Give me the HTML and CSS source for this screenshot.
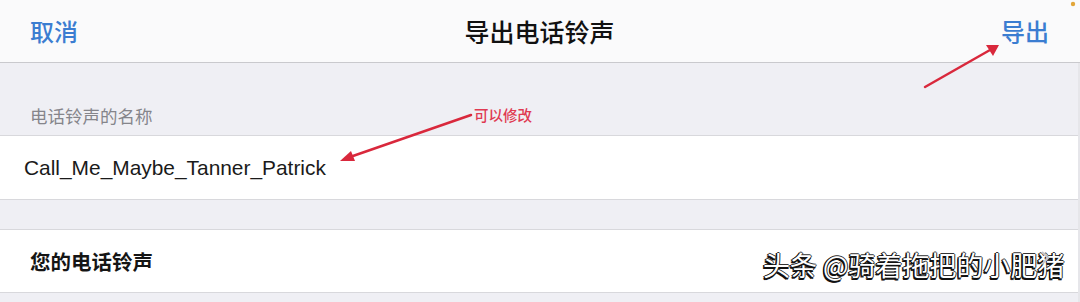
FILE: index.html
```html
<!DOCTYPE html>
<html lang="zh-CN">
<head>
<meta charset="utf-8">
<title>导出电话铃声</title>
<link rel="stylesheet" href="styles.css">
</head>
<body>
<div class="screen">
  <header class="navbar">
    <span class="nav-btn">取消</span>
    <span class="nav-title">导出电话铃声</span>
    <span class="nav-btn nav-right">导出</span>
  </header>
  <div class="section-header"><span class="section-label">电话铃声的名称</span></div>
  <div class="group">
    <div class="row row-input">Call_Me_Maybe_Tanner_Patrick</div>
  </div>
  <div class="spacer"></div>
  <div class="group">
    <div class="row row-link">
      <span class="row-title">您的电话铃声</span>
      <svg class="chevron" width="10" height="16" viewBox="0 0 10 16"><polyline points="2,2 8,8 2,14" fill="none" stroke="#c7c7cc" stroke-width="2"/></svg>
    </div>
  </div>
  <div class="bottom"></div>

  <svg class="annotations" width="1080" height="302" viewBox="0 0 1080 302">
    <line x1="471" y1="115" x2="350" y2="157" stroke="#d9283c" stroke-width="2.5" stroke-linecap="round"/>
    <polygon points="340,161 351,151 355,161" fill="#d9283c"/>
    <line x1="925" y1="87" x2="990" y2="50" stroke="#d9283c" stroke-width="2.5" stroke-linecap="round"/>
    <polygon points="999,45 986,45 993,56" fill="#d9283c"/>
    <circle cx="1073" cy="4" r="2.2" fill="#e2a63a"/>
  </svg>
  <span class="note">可以修改</span>
  <span class="watermark">头条 @骑着拖把的小肥猪</span>
</div>
</body>
</html>
```

FILE: styles.css
```css
html, body {
  margin: 0;
  padding: 0;
}
body {
  width: 1080px;
  height: 302px;
  overflow: hidden;
  background: #efeff4;
  font-family: "Noto Sans CJK SC", "Noto Sans", sans-serif;
}
.screen {
  position: relative;
  width: 1080px;
  height: 302px;
  background: #efeff4;
  box-shadow: inset -2px 0 0 #e6e6ea;
}
.navbar {
  height: 62px;
  border-bottom: 1px solid #c9c9cd;
  background: #fafafb;
  display: grid;
  grid-template-columns: 1fr auto 1fr;
  align-items: center;
  padding: 0 31px 0 30px;
}
.nav-btn {
  color: #3b7dd1;
  font-size: 24px;
  line-height: 30px;
  font-weight: 500;
}
.nav-right {
  justify-self: end;
}
.nav-title {
  color: #111;
  font-size: 25px;
  line-height: 30px;
  font-weight: 500;
}
.section-header {
  height: 72px;
  display: flex;
  align-items: flex-end;
  padding: 0 0 7px 30px;
  box-sizing: border-box;
}
.section-label {
  color: #85858b;
  font-size: 17.5px;
  line-height: 24px;
}
.group {
  background: #fff;
  border-top: 1px solid #d8d8dc;
  border-bottom: 1px solid #d8d8dc;
  margin-right: 2px;
}
.row {
  display: flex;
  align-items: center;
}
.row-input {
  height: 63px;
  padding-left: 24px;
  font-family: "Liberation Sans", Arial, sans-serif;
  font-size: 20.9px;
  color: #1a1a1a;
}
.spacer {
  height: 29px;
}
.row-link {
  height: 62px;
  padding: 0 28px 0 30px;
  justify-content: space-between;
}
.row-title {
  font-size: 20.5px;
  font-weight: 700;
  color: #151515;
}
.chevron {
  margin-top: -6px;
  position: relative;
  z-index: 1;
}
.annotations {
  position: absolute;
  left: 0;
  top: 0;
  pointer-events: none;
}
.note {
  position: absolute;
  left: 474px;
  top: 105px;
  color: #e03a52;
  font-size: 14.5px;
  line-height: 20px;
  font-weight: 500;
}
.watermark {
  position: absolute;
  left: 763px;
  top: 245px;
  font-size: 27px;
  line-height: 40px;
  color: #fff;
  text-shadow: -1.5px 0 0 #111, 0 1.5px 0 #111, -1.5px 1.5px 0 #111, 1px 0 0 #333, 0 -1px 0 #333;
  white-space: nowrap;
}
```
